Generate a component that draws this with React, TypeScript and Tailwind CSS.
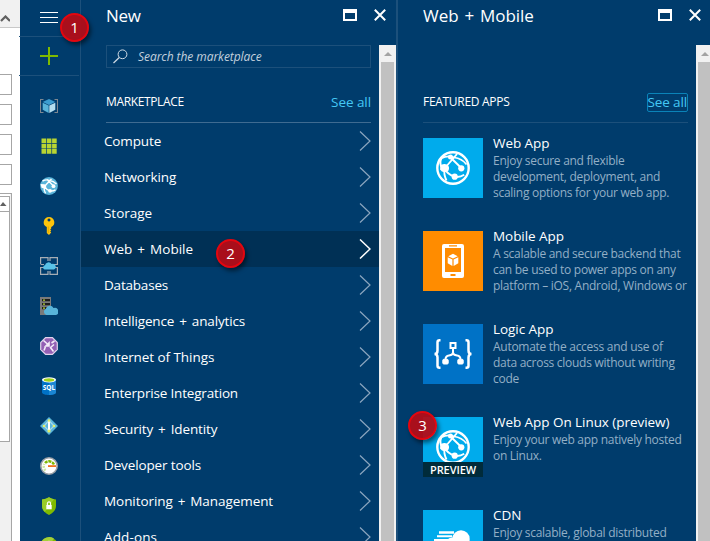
import type { ReactNode } from "react";

const categories = [
  { label: "Compute", track: "tracking-[-0.01em]" },
  { label: "Networking", track: "tracking-[-0.003em]" },
  { label: "Storage", track: "tracking-[-0.003em]" },
  { label: "Web + Mobile", track: "tracking-[0.001em] [word-spacing:1.5px]", active: true },
  { label: "Databases", track: "tracking-[-0.015em]" },
  { label: "Intelligence + analytics", track: "tracking-[-0.01em] [word-spacing:1.6px]" },
  { label: "Internet of Things", track: "tracking-[-0.005em]" },
  { label: "Enterprise Integration", track: "tracking-[-0.013em]" },
  { label: "Security + Identity", track: "tracking-[-0.01em] [word-spacing:1.6px]" },
  { label: "Developer tools", track: "tracking-[-0.01em]" },
  { label: "Monitoring + Management", track: "tracking-[-0.005em] [word-spacing:1.5px]" },
  { label: "Add-ons", track: "tracking-[0.01em]" },
];

function Globe() {
  return (
    <svg width="34" height="34" viewBox="0 0 34 34" fill="none" stroke="#fff">
      <circle cx="17" cy="17" r="15.700" strokeWidth="2.400" />
      <path d="M8.500 17.500L21 3M13 5L25.300 17M8.500 17.500q3 6 10.200 8.200M18.700 25.700q5 1 9.500-2M8.500 17.500q-1 6 2 12" strokeWidth="1.900" />
      <path d="M5 7.500Q12 4 18 6.500q8 1 12.500 7" strokeWidth="1.700" />
      <path d="M5.500 7Q3 12 6 17" strokeWidth="2" />
      <g fill="#fff" stroke="none">
        <path d="M4.500 14.500q5-3 8 .5q1.500 3-1 5.500q-5 2-7.500-2z" />
        <circle cx="14.500" cy="6" r="2.500" />
        <circle cx="25.300" cy="17.300" r="3.100" />
        <circle cx="18.700" cy="25.700" r="3.100" />
      </g>
    </svg>
  );
}

function Phone() {
  return (
    <svg width="22" height="34" viewBox="0 0 22 34">
      <path fillRule="evenodd" fill="#fff" d="M2 0h18a2 2 0 0 1 2 2v30a2 2 0 0 1-2 2H2a2 2 0 0 1-2-2V2a2 2 0 0 1 2-2zM3 4v24h16V4zM7 1.300v1.200h8V1.300zM8.500 30v2h5V30z" />
      <path fill="#fff" d="M11 9.800l4.700 2.400-4.700 2.400-4.700-2.400zM5.700 13.300l4.700 2.300v6.300l-4.700-2.700zM16.300 13.300l-4.700 2.300v6.300l4.700-2.700z" />
    </svg>
  );
}

function Logic() {
  return (
    <svg width="40" height="32" viewBox="0 0 40 32" fill="none" stroke="#fff">
      <path d="M7.500 2.200H6.500Q4.500 2.200 4.500 4.200v8.300q0 3.500-3 3.500q3 0 3 3.500v8.300q0 2 2 2h1M32.500 2.200h1q2 0 2 2v8.300q0 3.500 3 3.500q-3 0-3 3.500v8.300q0 2-2 2h-1" strokeWidth="2.500" />
      <rect x="17.500" y="5" width="5" height="5" strokeWidth="2" />
      <path d="M20 11v3.500q0 2.500-4 3q-3.500.5-3.500 4M20 14.500q0 2.500 4 3q3.500.5 3.500 4" strokeWidth="2" />
      <rect x="9.800" y="21.300" width="5.400" height="4.700" rx="1" fill="#fff" />
      <rect x="24.800" y="21.300" width="5.400" height="4.700" rx="1" fill="#fff" />
    </svg>
  );
}

function Cdn() {
  return (
    <svg className="-mt-px" width="40" height="32" viewBox="0 0 40 32" fill="#fff">
      <path d="M6 7.300h15v2.400H6zM4 11.300h15v2H4zM1 15h14v2.200H1z" />
      <circle cx="28" cy="15" r="8.700" />
      <circle cx="19" cy="19.500" r="6" />
      <rect x="13" y="15" width="25" height="14" rx="6" />
    </svg>
  );
}

const apps: { title: string; lines: string[]; tile: string; icon: ReactNode; preview?: boolean }[] = [
  { title: "Web App", lines: ["Enjoy secure and flexible", "development, deployment, and", "scaling options for your web app."], tile: "bg-[#00abec]", icon: <Globe /> },
  { title: "Mobile App", lines: ["A scalable and secure backend that", "can be used to power apps on any", "platform – iOS, Android, Windows or"], tile: "bg-[#ff8c00]", icon: <Phone /> },
  { title: "Logic App", lines: ["Automate the access and use of", "data across clouds without writing", "code"], tile: "bg-[#0072c6]", icon: <Logic /> },
  { title: "Web App On Linux (preview)", lines: ["Enjoy your web app natively hosted", "on Linux."], tile: "bg-[#00abec]", icon: <Globe />, preview: true },
  { title: "CDN", lines: ["Enjoy scalable, global distributed"], tile: "bg-[#00abec]", icon: <Cdn /> },
];

const railIcons: ReactNode[] = [
  <>
    <path d="M3.500 2.500h-3v13h3M14.500 2.500h3v13h-3" fill="none" stroke="#7d8791" strokeWidth="1.100" />
    <path d="M9 2l6.300 3L9 8 2.700 5z" fill="#3c9dd0" />
    <path d="M2.700 5.700l6 2.800V16l-6-3.200z" fill="#59b4d9" />
    <path d="M15.300 5.700l-6 2.800V16l6-3.200z" fill="#b5deef" />
  </>,
  <path fill="#b8d432" d="M1.500 1.500h4.600v4.600H1.500zM6.800 1.500h4.600v4.600H6.800zM12.100 1.500h4.600v4.600h-4.600zM1.500 6.800h4.600v4.600H1.500zM6.800 6.800h4.600v4.600H6.800zM12.100 6.800h4.600v4.600h-4.600zM1.500 12.100h4.600v4.600H1.500zM6.800 12.100h4.600v4.600H6.800zM12.100 12.100h4.600v4.600h-4.600z" />,
  <>
    <circle cx="9" cy="9" r="8.900" fill="#59b4d9" />
    <path d="M4.500 9.300L11.500 2M7 2.500L13.500 9M4.500 9.300q2 3.500 5.500 4.500M10 13.800q3 .5 5.500-1M4.500 9.300q-1 3.500 1 7M2.500 4q4-2 7-.5q4 .5 7 3.500" fill="none" stroke="#fff" strokeWidth="1.400" />
    <path d="M.5 7l4 .3 2 1.500-1.500 3-3.500-1z" fill="#fff" />
    <circle cx="13.500" cy="9.200" r="1.900" fill="#fff" />
    <circle cx="10" cy="13.800" r="1.900" fill="#fff" />
  </>,
  <>
    <path fillRule="evenodd" d="M9 0a5.700 5.300 0 0 1 2.200 10v1.500l-1 1 1 1-1 1 1 1L9 18l-2.200-2V10A5.700 5.300 0 0 1 9 0zm0 1.500a1.500 1.500 0 1 0 .01 0z" fill="#fdc40b" />
    <path d="M8.300 9.500v6.500" stroke="#e5a800" strokeWidth="1" />
  </>,
  <>
    <path d="M.6 7V.6H8V4M10 4V.6h7.400V8M.6 10v7.400H8V14M17.400 10v7.400H10V14M.6 7.500H4M17.400 7.500H14M.6 10.500H4M17.400 10.500H14" fill="none" stroke="#a6adb4" strokeWidth="1.200" />
    <path d="M4.500 12.500A2.200 2.200 0 0 1 5 8.300a3.500 3.500 0 0 1 6.500-1.200A2.600 2.600 0 0 1 14 12.500z" fill="#59c3e8" />
  </>,
  <>
    <path d="M0 0h11v18H0z" fill="#7a7a7a" />
    <path d="M2 2h8v2.300H2zM2 6h8v2.300H2zM2 10h8v2.300H2z" fill="#1e1e1e" />
    <path d="M3 3.200h2M3 7.200h2M3 11.200h2" stroke="#b8d432" strokeWidth="1.300" />
    <path d="M6.500 18a3.200 3.200 0 0 1-.8-6A4.200 4.200 0 0 1 13.500 11 3.600 3.600 0 0 1 16 18z" fill="#59b4d9" />
  </>,
  <>
    <path d="M5.300.1h7.400l5.200 5.200v7.400l-5.200 5.200H5.300L.1 12.700V5.300z" fill="#e2d3ec" />
    <path d="M5.800 1.300h6.400l4.500 4.500v6.400l-4.500 4.500H5.800l-4.500-4.500V5.800z" fill="#9460b4" />
    <path d="M3.500 3.500L8 7.500M14 7.500l-3.500 3 3 4M14.500 4l-3 2M5.500 9.500l-1.500 4" fill="none" stroke="#f3eaf8" strokeWidth="1.600" />
    <path d="M9.800 4v5.700H4z" fill="#f3eaf8" />
  </>,
  <>
    <path d="M2 2.700v12.500c0 3.700 14 3.700 14 0V2.700z" fill="#0072c6" />
    <path d="M9 2.700v15.200c3.500 0 7-.9 7-2.700V2.700z" fill="#1b86d3" />
    <ellipse cx="9" cy="2.800" rx="7" ry="2.600" fill="#fff" />
    <ellipse cx="9" cy="3" rx="5.300" ry="1.700" fill="#9fd11b" />
    <text x="9" y="13.200" textAnchor="middle" fontSize="6.500" fontWeight="700" fill="#fff" fontFamily="Open Sans, sans-serif">SQL</text>
  </>,
  <>
    <path d="M9 0l9 9-9 9-9-9z" fill="#59b4d9" />
    <path d="M9 3.500L4 9l5 5 5-5z" fill="none" stroke="#a8d9ec" strokeWidth="1.200" />
    <path d="M9 3.500v10.500" stroke="#fff" strokeWidth="2" />
    <circle cx="9" cy="3.500" r="1.300" fill="#e3f06a" />
    <circle cx="4" cy="9" r="1.300" fill="#e3f06a" />
    <circle cx="14" cy="9" r="1.300" fill="#e3f06a" />
    <circle cx="9" cy="14" r="1.600" fill="#e3f06a" />
  </>,
  <>
    <circle cx="9" cy="9" r="8.200" fill="#fff" stroke="#9a9fa5" strokeWidth="1.600" />
    <path d="M5.500 13.500a5.400 5.400 0 0 1-1.200-6.500" fill="none" stroke="#cfe8a0" strokeWidth="2.500" strokeDasharray="2 1" />
    <path d="M5 6a5.500 5.500 0 0 1 9 1.500" fill="none" stroke="#7fba00" strokeWidth="2.500" strokeDasharray="3 .8" />
    <path d="M8 8.200h8v1.800H8z" fill="#f0731d" />
  </>,
  <>
    <path d="M9 .2q3 2 7 2.200V9q0 5.500-7 8.900Q2 14.500 2 9V2.400Q6 2.200 9 .2z" fill="#7fba00" />
    <path d="M9 .2Q6 2.200 2 2.400V9q0 3.500 2.800 6L14 2.200Q11 1.500 9 .2z" fill="#98cc28" />
    <path d="M6.300 8h5.400v4.300H6.300z" fill="#fff" />
    <path d="M7.400 8V6.500a1.600 1.600 0 0 1 3.200 0V8" fill="none" stroke="#fff" strokeWidth="1.100" />
  </>,
  <>
    <circle cx="9" cy="9" r="8.800" fill="#7fba00" />
    <path d="M1 6A8.800 8.800 0 0 1 14 1.500L9 9z" fill="#a4d038" />
    <path d="M9 3.500l3 3H6z" fill="#fff" />
  </>,
];

function Scrollbar() {
  return (
    <div className="flex w-[17px] shrink-0 flex-col bg-[#f1f1f1]">
      <div className="flex h-[17px] items-center justify-center">
        <svg width="8" height="4" viewBox="0 0 8 4"><path d="M0 4l4-4 4 4z" fill="#a3a3a3" /></svg>
      </div>
      <div className="mx-0.5 flex-1 bg-[#c1c1c1]" />
    </div>
  );
}

function PanelHeader({ title, className }: { title: string; className: string }) {
  return (
    <div className={`flex h-[45px] shrink-0 pl-[25px] ${className}`}>
      <h1 className="flex-1 text-[17px] leading-[31px]">{title}</h1>
      <svg className="mt-[9px]" width="14" height="12" viewBox="0 0 14 12"><path fillRule="evenodd" fill="#fff" d="M0 0h14v12H0zM2 4v6h10V4z" /></svg>
      <svg className="mt-[9px] mr-[10px] ml-[17px]" width="12" height="12" viewBox="0 0 12 12"><path d="M.8.8l10.400 10.400M11.200.8L.8 11.200" stroke="#fff" strokeWidth="2" /></svg>
    </div>
  );
}

function Badge({ n, place }: { n: string; place: string }) {
  return (
    <div className={`absolute z-10 flex size-[29px] items-center justify-center rounded-full border-2 border-[#e3060f] bg-[#b20d18]/95 text-[15px] leading-none text-white shadow-[2px_3px_4px_rgba(0,0,0,0.5)] ${place}`}>
      {n}
    </div>
  );
}

function BrowserEdge() {
  return (
    <div className="flex w-5 shrink-0 flex-col bg-white">
      <div className="h-7 shrink-0 border-b border-[#c8c8c8] bg-[#f1f1f1] pt-[15px]">
        <svg width="10" height="7" viewBox="0 0 10 7"><path d="M1 6l4.500-4.500L10 6" fill="none" stroke="#606060" strokeWidth="2.200" /></svg>
      </div>
      <div className="mt-[46px] flex flex-col gap-[9px]">
        {[0, 1, 2, 3].map((i) => (
          <div key={i} className="h-[21px] w-3 border border-l-0 border-[#a6a6a6]" />
        ))}
      </div>
      <div className="mt-2 w-3 flex-1 border-t border-r border-[#a6a6a6] bg-[#f1f1f1]">
        <div className="mr-px flex h-[248px] flex-col border-b border-[#a6a6a6] bg-white pt-[2px]">
          <div className="flex h-4 items-center border border-l-0 border-[#a6a6a6]">
            <svg width="7" height="4" viewBox="0 0 7 4"><path d="M0 4l3-4 3.500 4z" fill="#606060" /></svg>
          </div>
          <div className="flex-1 border-r border-[#a6a6a6]" />
        </div>
      </div>
    </div>
  );
}

export default function App() {
  return (
    <div className="relative flex h-[541px] w-[710px] overflow-hidden bg-[#003c6c] font-['Open_Sans','Noto_Sans',sans-serif] text-white">
      <BrowserEdge />
      <nav className="flex w-[61px] shrink-0 flex-col items-center border-r border-[#1c507b] pr-[2px]">
        <div className="flex h-[37px] w-[60px] shrink-0 flex-col items-center border-b border-[#1c507b] pt-3">
          <svg width="18" height="11" viewBox="0 0 18 11"><path d="M0 .5h18M0 5.500h18M0 10.500h18" stroke="#fff" /></svg>
        </div>
        <div className="flex h-[39px] w-[60px] shrink-0 items-center justify-center border-b border-[#1c507b]">
          <svg width="18" height="18" viewBox="0 0 18 18"><path d="M9 0v18M0 9h18" stroke="#7fba00" strokeWidth="2" /></svg>
        </div>
        <div className="mt-[21px] flex flex-col gap-[22px]">
          {railIcons.map((icon, i) => (
            <svg key={i} className="shrink-0" width="18" height="18" viewBox="0 0 18 18">{icon}</svg>
          ))}
        </div>
      </nav>

      <section className="flex w-[315px] shrink-0 flex-col">
        <PanelHeader title="New" className="w-[315px] tracking-[-0.02em]" />
        <div className="flex min-h-0 flex-1">
          <div className="flex min-w-0 flex-1 flex-col">
            <div className="mr-2 ml-[25px] flex h-[23px] shrink-0 items-center border border-[#1c507b] pl-1.5">
              <svg width="15" height="15" viewBox="0 0 15 15" fill="none" stroke="#d0dbe5"><circle cx="9.500" cy="5.300" r="4.400" /><path d="M6.300 8.500L.5 14" strokeWidth="1.200" /></svg>
              <span className="ml-2.5 text-[12px] tracking-[-0.005em] text-[#c3d0dc] italic">Search the marketplace</span>
            </div>
            <div className="mr-2 ml-[25px] flex h-[55px] shrink-0 items-end justify-between border-b border-[#3f6b91] pb-[10px]">
              <h2 className="text-[12px] leading-[20px] tracking-[-0.03em]">MARKETPLACE</h2>
              <a className="text-[13.5px] leading-[19px] tracking-[-0.005em] text-[#44c8f5]">See all</a>
            </div>
            <ul>
              {categories.map((c) => (
                <li key={c.label} className={`flex h-9 items-center justify-between pr-2 pl-[23px] ${c.active ? "bg-[#003055]" : ""}`}>
                  <span className={`text-[13.5px] leading-[20px] ${c.track}`}>{c.label}</span>
                  <svg width="12" height="20" viewBox="0 0 12 20"><path d="M1 .5l10 9.500L1 19.500" fill="none" stroke={c.active ? "#fff" : "#8ba6bf"} strokeWidth={c.active ? 1.5 : 1.2} /></svg>
                </li>
              ))}
            </ul>
          </div>
          <Scrollbar />
        </div>
      </section>

      <section className="flex w-[317px] shrink-0 flex-col border-l-2 border-[#1c507b]">
        <PanelHeader title="Web + Mobile" className="w-[313px] tracking-[-0.002em] [word-spacing:1.500px]" />
        <div className="flex min-h-0 flex-1">
          <div className="flex min-w-0 flex-1 flex-col pr-2 pl-[25px]">
            <div className="flex h-[78px] shrink-0 items-end justify-between border-b border-[#1c507b] pb-[10px]">
              <h2 className="text-[12px] leading-[20px] tracking-[-0.025em]">FEATURED APPS</h2>
              <a className="rounded-[2px] border border-[#0a83b8] text-[13.5px] leading-[17px] tracking-[-0.01em] text-[#44c8f5]">See all</a>
            </div>
            <div className="mt-[15px] flex flex-col gap-[33px]">
              {apps.map((a) => (
                <article key={a.title} className="flex h-[60px] shrink-0 gap-[10px]">
                  <div className={`relative flex size-[60px] shrink-0 items-center justify-center ${a.tile}`}>
                    {a.icon}
                    {a.preview && (
                      <span className="absolute inset-x-0 bottom-0 h-[15px] bg-[#002b3a] text-center text-[11px] leading-[15px] font-semibold tracking-[-0.01em]">PREVIEW</span>
                    )}
                  </div>
                  <div className="-mt-1 whitespace-nowrap">
                    <h3 className="text-[13.5px] leading-[19px] tracking-[-0.004em]">{a.title}</h3>
                    {a.lines.map((l) => (
                      <p key={l} className="text-[12px] leading-4 tracking-[-0.023em] text-[#93afc6]">{l}</p>
                    ))}
                  </div>
                </article>
              ))}
            </div>
          </div>
          <Scrollbar />
        </div>
      </section>

      <Badge n="1" place="left-[60px] top-[13px]" />
      <Badge n="2" place="left-[216px] top-[239px]" />
      <Badge n="3" place="left-[408px] top-[411px]" />
    </div>
  );
}
